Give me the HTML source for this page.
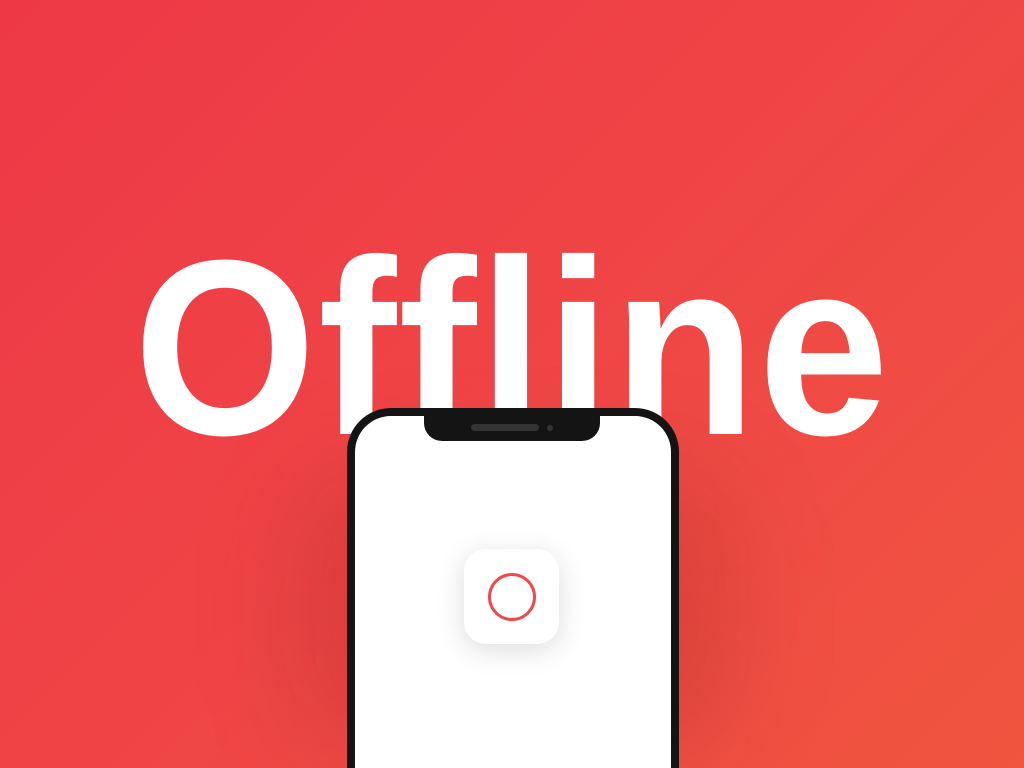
<!DOCTYPE html>
<html><head><style>
html,body{margin:0;padding:0;width:1024px;height:768px;overflow:hidden}
.w{position:relative;width:1024px;height:768px;overflow:hidden;background:linear-gradient(135deg,#ee3846 0%,#ef4546 50%,#f0553f 100%)}
.t{position:absolute;left:0;top:223px;width:1024px;text-align:center;font:bold 250px/1 "Liberation Sans",sans-serif;color:#fff;transform:scaleX(0.94);transform-origin:514px 0;white-space:nowrap;letter-spacing:2px}
.shadow{position:absolute;left:300px;top:470px;width:430px;height:280px;border-radius:80px;background:rgba(120,20,20,0.18);filter:blur(50px)}
.phone{position:absolute;left:347px;top:408px;width:316px;height:352px;border:8px solid #141414;border-bottom:0;border-radius:44px 44px 0 0;background:#fff}
.notch{position:absolute;left:424px;top:414px;width:176px;height:27px;background:#141414;border-radius:0 0 18px 18px}
.spk{position:absolute;left:471px;top:424px;width:68px;height:7px;border-radius:4px;background:#333}
.cam{position:absolute;left:547px;top:425px;width:6px;height:6px;border-radius:50%;background:#333}
.icon{position:absolute;left:464px;top:549px;width:95px;height:95px;border-radius:22px;background:#fff;box-shadow:0 6px 28px rgba(0,0,0,0.14)}
.ring{position:absolute;left:488px;top:573px;width:42px;height:42px;border:3px solid #ee4a4a;border-radius:50%}
</style></head><body>
<div class="w">
<div class="shadow"></div>
<div class="t">Offline</div>
<div class="phone"></div>
<div class="notch"></div>
<div class="spk"></div>
<div class="cam"></div>
<div class="icon"></div>
<div class="ring"></div>
</div>
</body></html>
